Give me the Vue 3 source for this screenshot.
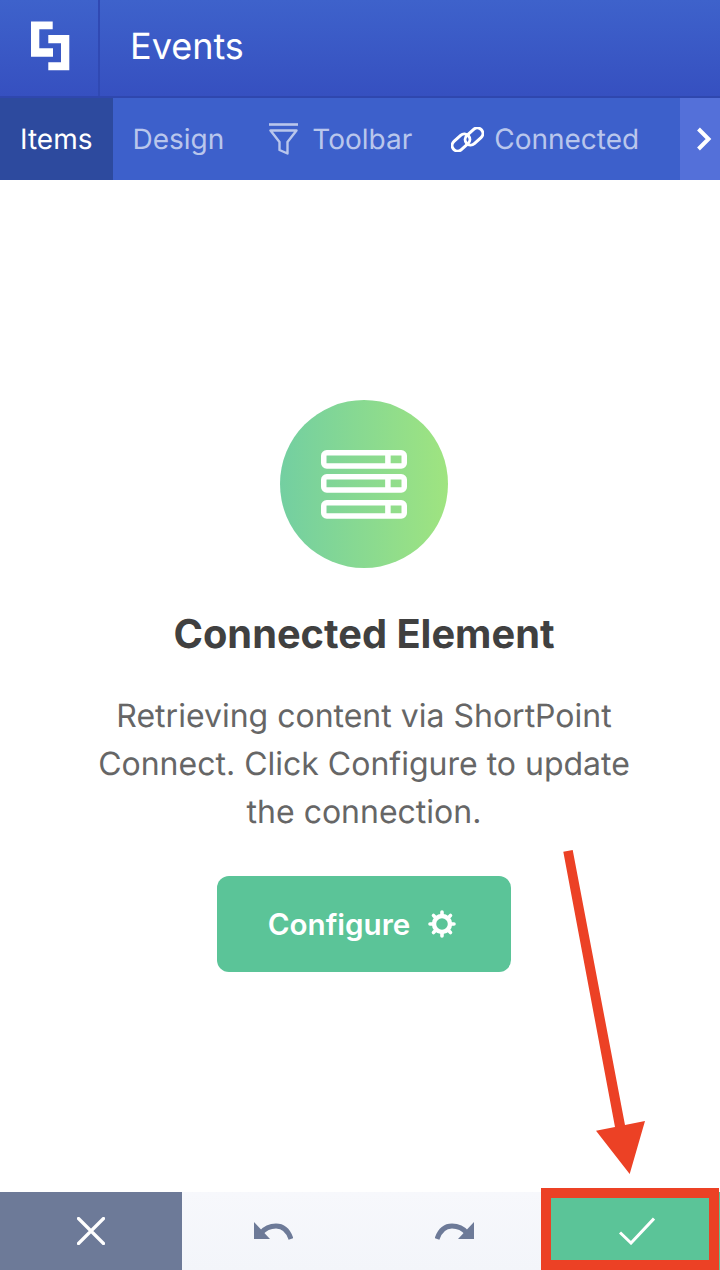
<template>
  <div class="page">
    <header class="topbar">
      <div class="logo-cell">
        <svg class="logo" viewBox="0 0 98 96" width="98" height="96" fill="#fff" aria-hidden="true">
          <path d="M31 21.5h21.7v7.800H39.300v19h13.700v8.400H31z" />
          <path d="M48.300 35h21v35.300h-21v-8h12.700v-19H48.300z" />
        </svg>
      </div>
      <div class="title">Events</div>
    </header>

    <nav class="tabs">
      <div class="tab active">Items</div>
      <div class="tab tab-design">Design</div>
      <div class="tab tab-toolbar">
        <svg class="tab-icon" viewBox="0 0 29 32" width="29" height="32" fill="none" stroke="#b9c6ec" stroke-width="2.4" aria-hidden="true">
          <path d="M0 1.500h29" stroke-width="2.600" />
          <path d="M1.500 7.500h26L18.500 19v11.500l-8-3.500v-8z" stroke-linejoin="round" />
        </svg>
        Toolbar
      </div>
      <div class="tab tab-connected">
        <svg class="tab-icon" viewBox="0 0 33 25" width="33" height="25" fill="none" stroke="#fff" stroke-width="3" aria-hidden="true">
          <rect x="0" y="10" width="20" height="11" rx="5.500" transform="rotate(-42 10 15.500)" />
          <rect x="13" y="4" width="20" height="11" rx="5.500" transform="rotate(-42 23 9.500)" />
        </svg>
        Connected
      </div>
      <div class="tab-next">
        <svg viewBox="0 0 16 24" width="16" height="24" fill="none" stroke="#fff" stroke-width="4" aria-hidden="true">
          <path d="M2.500 2l10 10-10 10" />
        </svg>
      </div>
    </nav>

    <main class="content">
      <div class="badge">
        <svg viewBox="0 0 86 70" width="86" height="70" fill="none" stroke="#fff" stroke-width="5.500" aria-hidden="true">
          <rect v-for="y in rowTops" :key="y" x="2.750" :y="y" width="80.500" height="13.200" rx="3" />
          <path v-for="y in rowTops" :key="'d' + y" :d="`M66.900 ${y}v13.200`" />
        </svg>
      </div>
      <h1 class="heading">Connected Element</h1>
      <p class="desc">Retrieving content via ShortPoint Connect. Click Configure to update the connection.</p>
      <button class="configure">
        Configure
        <svg viewBox="0 0 28 28" width="28" height="28" fill="none" stroke="#fff" aria-hidden="true">
          <circle cx="14" cy="14" r="8" stroke-width="4.400" />
          <path stroke-width="3.600" stroke-linecap="round" d="M14 2v3M14 23v3M2 14h3M23 14h3M5.500 5.500l2.200 2.200M20.300 20.300l2.200 2.200M22.500 5.500l-2.200 2.200M7.700 20.300l-2.200 2.200" />
        </svg>
      </button>
    </main>

    <footer class="actions">
      <div class="action cancel">
        <svg viewBox="0 0 28 28" width="28" height="28" fill="none" stroke="#fff" stroke-width="3.200" stroke-linecap="round" aria-hidden="true">
          <path d="M1.500 1.500l25 25M26.500 1.500l-25 25" />
        </svg>
      </div>
      <div class="action">
        <svg viewBox="0 0 40 18" width="40" height="18" aria-hidden="true">
          <path fill="#6d7a98" d="M1 0l16 17H1z" />
          <path fill="none" stroke="#6d7a98" stroke-width="5" d="M8 11C13 5 18 4 23 4c7 0 12 4 15 13" />
        </svg>
      </div>
      <div class="action">
        <svg class="flip" viewBox="0 0 40 18" width="40" height="18" aria-hidden="true">
          <path fill="#6d7a98" d="M1 0l16 17H1z" />
          <path fill="none" stroke="#6d7a98" stroke-width="5" d="M8 11C13 5 18 4 23 4c7 0 12 4 15 13" />
        </svg>
      </div>
      <div class="action ok">
        <svg viewBox="0 0 36 28" width="36" height="28" fill="none" stroke="#fff" stroke-width="3" aria-hidden="true">
          <path d="M1 15.500l11 10.500L35 1.500" />
        </svg>
      </div>
    </footer>

    <!-- annotation drawn over the screenshot -->
    <div class="frame"></div>
    <svg class="arrow" viewBox="0 0 100 340" width="100" height="340" aria-hidden="true">
      <path fill="#ec4125" d="M8.300 11.700L17.700 10 70 285l20-4-15.300 53L41 290.700l19-3.700z" />
    </svg>
  </div>
</template>

<script setup>
const rowTops = [3.75, 27.75, 53.75]
</script>

<style>
html, body { margin: 0; background: #fff; }
</style>

<style scoped>
.page {
  position: relative;
  width: 720px;
  height: 1270px;
  overflow: hidden;
  display: flex;
  flex-direction: column;
  font-family: Inter, "Liberation Sans", sans-serif;
  text-rendering: geometricPrecision;
  background: #fff;
}
.topbar {
  height: 96px;
  flex: none;
  display: flex;
  background: linear-gradient(180deg, #3e62cb, #3650c0);
  border-bottom: 2px solid #2f47ae;
}
.logo-cell {
  width: 98px;
  flex: none;
  border-right: 2px solid #3049b3;
}
.logo { display: block; }
.title {
  padding-left: 30px;
  line-height: 92px;
  font-size: 36px;
  font-weight: 400;
  color: #fff;
}
.tabs {
  height: 82px;
  flex: none;
  display: flex;
  background: #3d60cb;
}
.tab {
  display: flex;
  align-items: center;
  padding: 0 20px;
  font-size: 28px;
  color: #b9c6ec;
  white-space: nowrap;
}
.tab.active {
  padding-right: 21px;
  background: #2d4a9e;
  color: #fff;
}
.tab-design { padding-left: 19px; }
.tab-toolbar { gap: 14px; padding-left: 25px; }
.tab-connected { gap: 10px; padding-left: 19px; }
.tab-next {
  margin-left: auto;
  width: 40px;
  box-sizing: border-box;
  padding-left: 16px;
  flex: none;
  display: flex;
  align-items: center;
  background: #5470d9;
}
.content {
  flex: 1;
  width: 728px;
  padding-top: 220px;
  box-sizing: border-box;
  display: flex;
  flex-direction: column;
  align-items: center;
}
.badge {
  width: 168px;
  height: 168px;
  border-radius: 50%;
  display: flex;
  align-items: center;
  justify-content: center;
  background: linear-gradient(90deg, #73cfa1, #9fe480);
}
.heading {
  margin: 42px 0 0;
  font-size: 39.8px;
  line-height: 48px;
  font-weight: 700;
  color: #404040;
}
.desc {
  margin: 34px 0 0;
  width: 560px;
  font-size: 32px;
  line-height: 48px;
  text-align: center;
  color: #666;
}
.configure {
  margin-top: 40px;
  width: 294px;
  height: 96px;
  padding: 0 4px 0 0;
  border: none;
  border-radius: 12px;
  background: #5bc498;
  color: #fff;
  font-family: inherit;
  font-size: 29.6px;
  font-weight: 600;
  display: flex;
  align-items: center;
  justify-content: center;
  gap: 18px;
}
.actions {
  height: 78px;
  flex: none;
  display: flex;
  width: 728px;
  background: linear-gradient(180deg, #f7f8fc, #f3f5fa);
}
.action {
  flex: 0 0 182px;
  display: flex;
  align-items: center;
  justify-content: center;
}
.cancel { background: #6d7a98; }
.ok { background: #5bc498; }
.flip { transform: scaleX(-1); }
.frame {
  position: absolute;
  left: 541px;
  top: 1188px;
  width: 178px;
  height: 82px;
  box-sizing: border-box;
  border: 10px solid #ec4125;
}
.arrow {
  position: absolute;
  left: 555px;
  top: 840px;
}
</style>
